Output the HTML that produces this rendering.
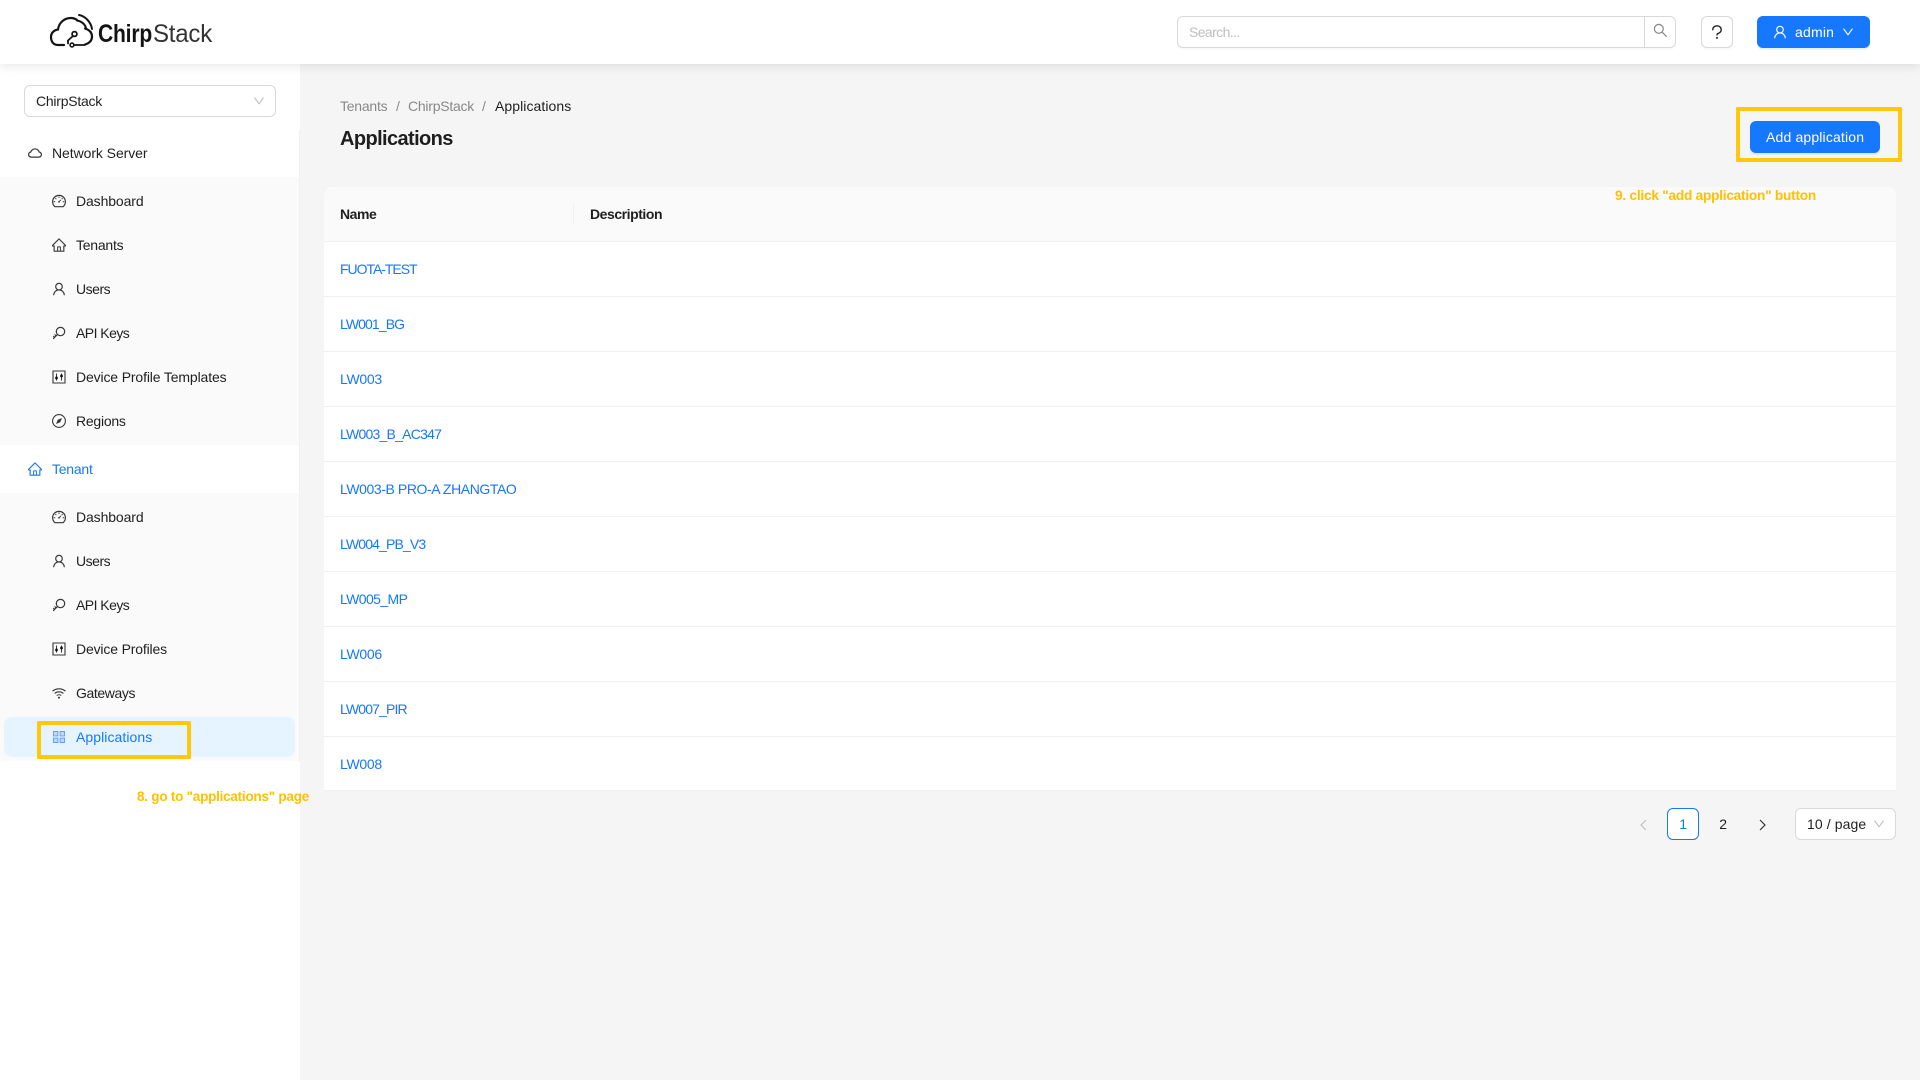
<!DOCTYPE html>
<html lang="en"><head><meta charset="utf-8"><title>Applications</title>
<style>
*{box-sizing:border-box}
html,body{margin:0;padding:0;width:1920px;height:1080px;overflow:hidden;background:#f5f5f5}
body{font:14px/22px "Liberation Sans",sans-serif;color:rgba(0,0,0,.88);letter-spacing:-.24px;position:relative}
.a{position:absolute;white-space:nowrap}
.t{position:absolute;white-space:nowrap;line-height:22px;height:22px}
header{position:absolute;left:0;top:0;width:1920px;height:64px;background:#fff;box-shadow:0 2px 10px rgba(0,0,0,.1);z-index:3}
aside{position:absolute;left:0;top:64px;width:300px;height:1016px;background:#fff;z-index:1}
.sub{position:absolute;left:0;width:299px;background:#fafafa}
.ic{position:absolute;width:14px;height:14px;fill:currentColor;color:rgba(0,0,0,.78)}
.blue{color:#1677ff}
.box{position:absolute;background:#fff;border:1px solid #d9d9d9;border-radius:6px}
.btn{position:absolute;background:#1677ff;color:#fff;border-radius:6px;box-shadow:0 2px 0 rgba(5,145,255,.1)}
.row{position:absolute;left:324px;width:1572px;height:55px;background:#fff;border-bottom:1px solid #f0f0f0}
.row span{position:absolute;left:16px;top:16px;color:#1677ff;letter-spacing:-.3px}
.y{position:absolute;border:4px solid #ffc80a;border-radius:1px;z-index:5}
</style></head>
<body>
<svg width="0" height="0" style="position:absolute">
<symbol id="cloud" viewBox="64 64 896 896"><path d="M811.4 418.7C765.6 297.9 648.9 212 512.2 212S258.8 297.8 213 418.6C127.3 441.1 64 519.1 64 612c0 110.5 89.5 200 199.9 200h496.2C870.5 812 960 722.5 960 612c0-92.7-63.1-170.7-148.6-193.3zm36.3 281a123.07 123.07 0 01-87.6 36.3H263.9c-33.1 0-64.2-12.9-87.6-36.3A123.3 123.3 0 01140 612c0-28 9.1-54.3 26.2-76.3a125.7 125.7 0 0166.1-43.7l37.9-9.9 13.9-36.6c8.6-22.8 20.6-44.1 35.7-63.4a245.6 245.6 0 0152.4-49.9c41.1-28.9 89.5-44.2 140-44.2s98.9 15.3 140 44.2c19.9 14 37.5 30.8 52.4 49.9 15.1 19.3 27.1 40.7 35.7 63.4l13.8 36.5 37.8 10c54.3 14.5 92.1 63.8 92.1 120 0 33.1-12.9 64.3-36.3 87.7z"/></symbol>
<symbol id="home" viewBox="64 64 896 896"><path d="M946.5 505L560.1 118.8l-25.9-25.9a31.5 31.5 0 00-44.4 0L77.5 505a63.9 63.9 0 00-18.8 46c.4 35.2 29.7 63.3 64.9 63.3h42.5V940h691.8V614.3h43.4c17.1 0 33.2-6.7 45.3-18.8a63.6 63.6 0 0018.7-45.3c0-17-6.7-33.1-18.8-45.2zM568 868H456V664h112v204zm217.9-325.7V868H632V640c0-22.1-17.9-40-40-40H432c-22.1 0-40 17.9-40 40v228H238.1V542.3h-96l370-369.7 23.1 23.1L882 542.3h-96.1z"/></symbol>
<symbol id="user" viewBox="64 64 896 896"><path d="M858.5 763.6a374 374 0 00-80.6-119.5 375.63 375.63 0 00-119.5-80.6c-.4-.2-.8-.3-1.2-.5C719.5 518 760 444.7 760 362c0-137-111-248-248-248S264 225 264 362c0 82.7 40.5 156 102.8 201.1-.4.2-.8.3-1.2.5-44.8 18.9-85 46-119.5 80.6a375.63 375.63 0 00-80.6 119.5A371.7 371.7 0 00136 901.8a8 8 0 008 8.2h60c4.4 0 7.9-3.5 8-7.8 2-77.2 33-149.5 87.8-204.3 56.7-56.7 132-87.9 212.2-87.9s155.5 31.2 212.2 87.9C779 752.7 810 825 812 902.2c.1 4.4 3.6 7.8 8 7.8h60a8 8 0 008-8.2c-1-47.8-10.9-94.3-29.5-138.2zM512 534c-45.9 0-89.1-17.9-121.6-50.4S340 407.9 340 362c0-45.9 17.9-89.1 50.4-121.6S466.1 190 512 190s89.1 17.9 121.6 50.4S684 316.1 684 362c0 45.9-17.9 89.1-50.4 121.6S557.9 534 512 534z"/></symbol>
<symbol id="search" viewBox="64 64 896 896"><path d="M909.6 854.5L649.9 594.8C690.2 542.7 712 479 712 412c0-80.2-31.3-155.4-87.9-212.1-56.6-56.7-132-87.9-212.1-87.9s-155.5 31.3-212.1 87.9C143.2 256.5 112 331.8 112 412c0 80.1 31.3 155.5 87.9 212.1C256.5 680.8 331.8 712 412 712c67 0 130.6-21.8 182.7-62l259.7 259.6a8.2 8.2 0 0011.6 0l43.6-43.5a8.2 8.2 0 000-11.6zM570.4 570.4C528 612.7 471.8 636 412 636s-116-23.3-158.4-65.6C211.3 528 188 471.8 188 412s23.3-116.1 65.6-158.4C296 211.3 352.2 188 412 188s116.1 23.2 158.4 65.6S636 352.2 636 412s-23.3 116.1-65.6 158.4z"/></symbol>
<symbol id="down" viewBox="64 64 896 896"><path d="M884 256h-75c-5.1 0-9.9 2.5-12.9 6.6L512 654.2 227.9 262.6c-3-4.1-7.8-6.6-12.9-6.6h-75c-6.5 0-10.3 7.4-6.5 12.7l352.6 486.1c12.8 17.6 39 17.6 51.7 0l352.6-486.1c3.9-5.3.1-12.7-6.4-12.7z"/></symbol>
<symbol id="q" viewBox="64 64 896 896"><path d="M764 280.9c-14-30.6-33.9-58.1-59.3-81.6C653.1 151.4 584.6 125 512 125s-141.1 26.4-192.7 74.2c-25.4 23.6-45.3 51-59.3 81.7-14.6 32-22 65.9-22 100.9v27c0 6.2 5 11.2 11.2 11.2h54c6.2 0 11.2-5 11.2-11.2v-27c0-99.5 88.6-180.4 197.6-180.4s197.6 80.9 197.6 180.4c0 40.8-14.5 79.2-42 111.2-27.2 31.7-65.6 54.4-108.1 64-24.3 5.5-46.2 19.2-61.7 38.8a110.85 110.85 0 00-23.9 68.6v31.4c0 6.2 5 11.2 11.2 11.2h54c6.2 0 11.2-5 11.2-11.2v-31.4c0-15.7 10.9-29.5 26-32.9 58.4-13.2 111.4-44.7 149.3-88.7 19.1-22.3 34-47.1 44.3-74 10.7-27.9 16.1-57.2 16.1-87 0-35-7.4-69-22-100.9zM512 787c-30.9 0-56 25.1-56 56s25.1 56 56 56 56-25.1 56-56-25.1-56-56-56z"/></symbol>
<symbol id="dash" viewBox="64 64 896 896"><path d="M924.8 385.6a446.7 446.7 0 00-96-142.4 446.7 446.7 0 00-142.4-96C631.1 123.8 572.5 112 512 112s-119.1 11.8-174.4 35.2a446.7 446.7 0 00-142.4 96 446.7 446.7 0 00-96 142.4C75.8 440.9 64 499.5 64 560c0 132.7 58.3 257.7 159.9 343.1l1.7 1.4c5.8 4.8 13.1 7.5 20.6 7.5h531.7c7.5 0 14.8-2.7 20.6-7.5l1.7-1.4C901.7 817.7 960 692.7 960 560c0-60.5-11.9-119.1-35.2-174.4zM761.4 836H262.6A371.12 371.12 0 01140 560c0-99.4 38.7-192.8 109-263 70.3-70.3 163.7-109 263-109 99.4 0 192.8 38.7 263 109 70.3 70.3 109 163.7 109 263 0 105.6-44.5 205.5-122.6 276zM623.5 421.5a8.03 8.03 0 00-11.3 0L527.7 506c-18.7-5-39.4-.2-54.1 14.5a55.95 55.95 0 000 79.2 55.95 55.95 0 0079.2 0 55.87 55.87 0 0014.5-54.1l84.5-84.5c3.1-3.1 3.1-8.2 0-11.3l-28.3-28.3zM490 320h44c4.4 0 8-3.6 8-8v-80c0-4.4-3.6-8-8-8h-44c-4.4 0-8 3.6-8 8v80c0 4.4 3.6 8 8 8zm260 218v44c0 4.4 3.6 8 8 8h80c4.4 0 8-3.6 8-8v-44c0-4.4-3.6-8-8-8h-80c-4.4 0-8 3.6-8 8zm12.7-197.2l-31.1-31.1a8.03 8.03 0 00-11.3 0l-56.6 56.6a8.03 8.03 0 000 11.3l31.1 31.1c3.1 3.1 8.2 3.1 11.3 0l56.6-56.6c3.1-3.1 3.1-8.2 0-11.3zm-458.6-31.1a8.03 8.03 0 00-11.3 0l-31.1 31.1a8.03 8.03 0 000 11.3l56.6 56.6c3.1 3.1 8.2 3.1 11.3 0l31.1-31.1c3.1-3.1 3.1-8.2 0-11.3l-56.6-56.6zM262 530h-80c-4.4 0-8 3.6-8 8v44c0 4.4 3.6 8 8 8h80c4.4 0 8-3.6 8-8v-44c0-4.4-3.6-8-8-8z"/></symbol>
<symbol id="key" viewBox="64 64 896 896"><path d="M608 112c-167.9 0-304 136.1-304 304 0 70.3 23.9 135 63.9 186.5l-41.1 41.1-62.3-62.3a8.15 8.15 0 00-11.4 0l-39.8 39.8a8.15 8.15 0 000 11.4l62.3 62.3-44.9 44.9-62.3-62.3a8.15 8.15 0 00-11.4 0l-39.8 39.8a8.15 8.15 0 000 11.4l62.3 62.3-65.3 65.3a8.03 8.03 0 000 11.3l42.3 42.3c3.1 3.1 8.2 3.1 11.3 0l253.6-253.6A304.06 304.06 0 00608 720c167.9 0 304-136.1 304-304S775.9 112 608 112zm161.2 465.2C726.2 620.3 668.9 644 608 644c-60.9 0-118.2-23.7-161.2-66.8-43.1-43-66.8-100.3-66.8-161.2 0-60.9 23.7-118.2 66.8-161.2 43-43.1 100.3-66.8 161.2-66.8 60.9 0 118.2 23.7 161.2 66.8 43.1 43 66.8 100.3 66.8 161.2 0 60.9-23.7 118.2-66.8 161.2z"/></symbol>
<symbol id="ctrl" viewBox="0 0 14 14"><path d="M1 1h12v12H1z" fill="none" stroke="currentColor" stroke-width="1.1"/><path d="M4.5 3.5v7M9.5 3.5v7" stroke="currentColor" stroke-width="1"/><circle cx="4.5" cy="8" r="1.5"/><circle cx="9.5" cy="6" r="1.5"/></symbol>
<symbol id="comp" viewBox="0 0 14 14"><circle cx="7" cy="7" r="6.4" fill="none" stroke="currentColor" stroke-width="1.1"/><path d="M10 4L8.2 8.2 4 10l1.8-4.2z"/></symbol>
<symbol id="wifi" viewBox="0 0 14 14"><path d="M.5 5.2c3.7-3.2 9.3-3.2 13 0M2.6 7.4c2.5-2.1 6.3-2.1 8.8 0M4.7 9.5c1.3-1 3.3-1 4.6 0" fill="none" stroke="currentColor" stroke-width="1.1"/><circle cx="7" cy="11.6" r="1"/></symbol>
<symbol id="apps" viewBox="0 0 14 14"><path d="M1.500 1.500h4.400v4.400H1.500zM8.100 1.500h4.400v4.400H8.100zM1.500 8.100h4.400v4.400H1.500zM8.100 8.100h4.400v4.400H8.100z" fill="#bcd8ff" stroke="#5b9dff" stroke-width=".9"/></symbol>
</svg>

<header>
  <svg class="a" style="left:44px;top:10px" width="60" height="45" viewBox="0 0 60 45" fill="none" stroke="#141414" stroke-width="2.2" stroke-linecap="round">
    <path d="M20 35H14C9 35 7 31 7 27C7 23 10 20 14 19.500C15 12 21 8 27 8C29 8 31 8.500 33 10"/>
    <path d="M41 18.500C46 20 48 23 48 26.500C48 30 46 33 41 34.500"/>
    <path d="M35 5C41 6 47 12 48 19" stroke-width="2"/>
    <path d="M33 10.500C37 11 41 14 42 18" stroke-width="2"/>
    <circle cx="30.500" cy="24" r="2.400" stroke-width="1.800"/>
    <path d="M29 26l-5 4.500" stroke-width="1.800"/>
    <path d="M24 30.500v3" stroke-width="1.800"/>
    <circle cx="28" cy="35" r="1.900" stroke-width="1.600"/>
    <path d="M30 35h11" stroke-width="1.800"/>
  </svg>
  <svg class="a" style="left:96px;top:12px" width="120" height="40" viewBox="0 0 120 40"><text x="2" y="30" font-family="Liberation Sans,sans-serif" font-size="25" font-weight="700" fill="#141414" textLength="54" lengthAdjust="spacingAndGlyphs">Chirp</text><text x="57" y="30" font-family="Liberation Sans,sans-serif" font-size="25" fill="#333" textLength="59" lengthAdjust="spacingAndGlyphs">Stack</text></svg>

  <div class="box" style="left:1177px;top:16px;width:499px;height:32px;box-shadow:0 2px 0 rgba(0,0,0,.02)"></div>
  <div class="a" style="left:1644px;top:16px;width:1px;height:32px;background:#d9d9d9"></div>
  <div class="t" style="left:1189px;top:21px;color:#bfbfbf;letter-spacing:-.6px">Search...</div>
  <svg class="ic" style="left:1653px;top:23px;width:15px;height:15px;color:rgba(0,0,0,.45)"><use href="#search"/></svg>
  <div class="box" style="left:1701px;top:16px;width:32px;height:32px;box-shadow:0 2px 0 rgba(0,0,0,.02)"></div>
  <svg class="ic" style="left:1709px;top:24px;width:16px;height:16px;color:#222"><use href="#q"/></svg>
  <div class="btn" style="left:1757px;top:16px;width:113px;height:32px"></div>
  <svg class="ic" style="left:1773px;top:25px;color:#fff"><use href="#user"/></svg>
  <div class="t" style="left:1795px;top:21px;color:#fff;letter-spacing:.2px">admin</div>
  <svg class="ic" style="left:1842px;top:26px;width:12px;height:12px;color:#fff"><use href="#down"/></svg>
</header>

<aside></aside>
<div class="a" style="left:0;top:64px;width:300px;height:1016px;z-index:2">
  <div class="box" style="left:24px;top:21px;width:252px;height:32px"></div>
  <div class="t" style="left:36px;top:26px">ChirpStack</div>
  <svg class="ic" style="left:253px;top:31px;width:12px;height:12px;color:#bfbfbf"><use href="#down"/></svg>

  <div class="sub" style="top:113px;height:268px"></div>
  <div class="sub" style="top:429px;height:268px"></div>
  <div class="a" style="left:299px;top:66px;width:1px;height:632px;background:#f0f0f0"></div>

  <svg class="ic" style="left:28px;top:82px"><use href="#cloud"/></svg>
  <div class="t" style="left:52px;top:78px;letter-spacing:-.07px">Network Server</div>
  <svg class="ic" style="left:52px;top:130px"><use href="#dash"/></svg><div class="t" style="left:76px;top:126px;letter-spacing:-.11px">Dashboard</div>
  <svg class="ic" style="left:52px;top:174px"><use href="#home"/></svg><div class="t" style="left:76px;top:170px">Tenants</div>
  <svg class="ic" style="left:52px;top:218px"><use href="#user"/></svg><div class="t" style="left:76px;top:214px;letter-spacing:-.48px">Users</div>
  <svg class="ic" style="left:52px;top:262px"><use href="#key"/></svg><div class="t" style="left:76px;top:258px;letter-spacing:-.54px">API Keys</div>
  <svg class="ic" style="left:52px;top:306px"><use href="#ctrl"/></svg><div class="t" style="left:76px;top:302px;letter-spacing:-.14px">Device Profile Templates</div>
  <svg class="ic" style="left:52px;top:350px"><use href="#comp"/></svg><div class="t" style="left:76px;top:346px">Regions</div>

  <svg class="ic blue" style="left:28px;top:398px;color:#1677ff"><use href="#home"/></svg>
  <div class="t blue" style="left:52px;top:394px">Tenant</div>
  <svg class="ic" style="left:52px;top:446px"><use href="#dash"/></svg><div class="t" style="left:76px;top:442px;letter-spacing:-.11px">Dashboard</div>
  <svg class="ic" style="left:52px;top:490px"><use href="#user"/></svg><div class="t" style="left:76px;top:486px;letter-spacing:-.48px">Users</div>
  <svg class="ic" style="left:52px;top:534px"><use href="#key"/></svg><div class="t" style="left:76px;top:530px;letter-spacing:-.54px">API Keys</div>
  <svg class="ic" style="left:52px;top:578px"><use href="#ctrl"/></svg><div class="t" style="left:76px;top:574px;letter-spacing:-.16px">Device Profiles</div>
  <svg class="ic" style="left:52px;top:622px"><use href="#wifi"/></svg><div class="t" style="left:76px;top:618px;letter-spacing:-.39px">Gateways</div>
  <div class="a" style="left:4px;top:653px;width:291px;height:40px;background:#e6f4ff;border-radius:8px"></div>
  <svg class="ic" style="left:52px;top:666px"><use href="#apps"/></svg><div class="t blue" style="left:76px;top:662px;letter-spacing:.07px">Applications</div>
</div>

<div class="t" style="left:340px;top:95px;color:rgba(0,0,0,.45)">Tenants</div>
<div class="t" style="left:396px;top:95px;color:rgba(0,0,0,.45)">/</div>
<div class="t" style="left:408px;top:95px;color:rgba(0,0,0,.45)">ChirpStack</div>
<div class="t" style="left:482px;top:95px;color:rgba(0,0,0,.45)">/</div>
<div class="t" style="left:495px;top:95px;letter-spacing:.07px">Applications</div>
<div class="a" style="left:340px;top:125px;font-size:20px;line-height:28px;font-weight:700;letter-spacing:-.6px">Applications</div>

<div class="btn" style="left:1750px;top:121px;width:130px;height:32px"></div>
<div class="t" style="left:1766px;top:126px;color:#fff;letter-spacing:.16px">Add application</div>

<div class="a" style="left:324px;top:187px;width:1572px;height:55px;background:#fafafa;border-radius:8px 8px 0 0;border-bottom:1px solid #f0f0f0"></div>
<div class="a" style="left:573px;top:203px;width:1px;height:22px;background:#f0f0f0"></div>
<div class="t" style="left:340px;top:203px;font-weight:700;letter-spacing:-.45px">Name</div>
<div class="t" style="left:590px;top:203px;font-weight:700;letter-spacing:-.45px">Description</div>

<div class="row" style="top:242px"><span style="letter-spacing:-1.03px">FUOTA-TEST</span></div>
<div class="row" style="top:297px"><span style="letter-spacing:-.9px">LW001_BG</span></div>
<div class="row" style="top:352px"><span>LW003</span></div>
<div class="row" style="top:407px"><span style="letter-spacing:-.76px">LW003_B_AC347</span></div>
<div class="row" style="top:462px"><span style="letter-spacing:-.41px">LW003-B PRO-A ZHANGTAO</span></div>
<div class="row" style="top:517px"><span style="letter-spacing:-.85px">LW004_PB_V3</span></div>
<div class="row" style="top:572px"><span style="letter-spacing:-.6px">LW005_MP</span></div>
<div class="row" style="top:627px"><span>LW006</span></div>
<div class="row" style="top:682px"><span style="letter-spacing:-.85px">LW007_PIR</span></div>
<div class="row" style="top:737px;height:54px"><span>LW008</span></div>

<svg class="a" style="left:1638px;top:819px" width="10" height="12" viewBox="0 0 10 12" fill="none" stroke="#bfbfbf" stroke-width="1.2"><path d="M8 1L3 6l5 5"/></svg>
<div class="a" style="left:1667px;top:808px;width:32px;height:32px;border:1px solid #1677ff;border-radius:6px;background:#fff;color:#1677ff;text-align:center;line-height:30px">1</div>
<div class="a" style="left:1707px;top:808px;width:32px;height:32px;text-align:center;line-height:32px">2</div>
<svg class="a" style="left:1758px;top:819px" width="10" height="12" viewBox="0 0 10 12" fill="none" stroke="#333" stroke-width="1.2"><path d="M2 1l5 5-5 5"/></svg>
<div class="box" style="left:1795px;top:808px;width:101px;height:32px"></div>
<div class="t" style="left:1807px;top:813px;letter-spacing:.1px">10 / page</div>
<svg class="ic" style="left:1873px;top:818px;width:12px;height:12px;color:#bfbfbf"><use href="#down"/></svg>

<div class="y" style="left:1736px;top:107px;width:166px;height:55px"></div>
<div class="y" style="left:37px;top:721px;width:154px;height:38px"></div>
<svg class="a" style="left:1610px;top:185px;z-index:6" width="215" height="20"><text x="5" y="15" font-family="Liberation Sans,sans-serif" font-size="13.500" font-weight="700" fill="#ffc000" textLength="201" lengthAdjust="spacingAndGlyphs">9. click "add application" button</text></svg>
<svg class="a" style="left:132px;top:786px;z-index:6" width="185" height="20"><text x="5" y="15" font-family="Liberation Sans,sans-serif" font-size="13.500" font-weight="700" fill="#ffc000" textLength="172" lengthAdjust="spacingAndGlyphs">8. go to "applications" page</text></svg>
</body></html>
